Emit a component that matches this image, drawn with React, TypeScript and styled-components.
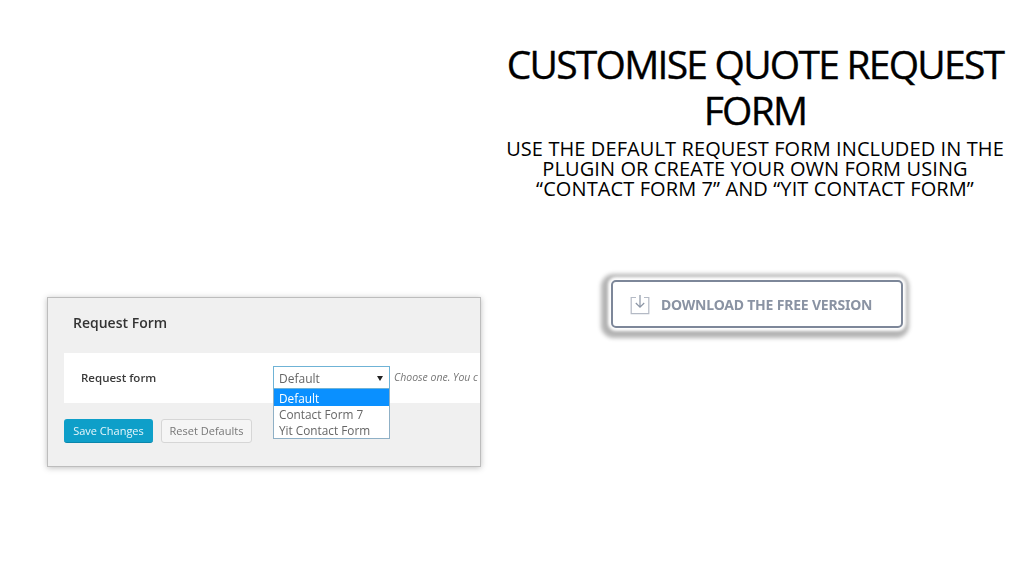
import React from 'react';
import styled, { createGlobalStyle } from 'styled-components';

const GlobalStyle = createGlobalStyle`
  html, body { margin: 0; padding: 0; background: #fff; }
`;

function DownloadIcon() {
  return (
    <svg width="20" height="21" viewBox="0 0 20 21" fill="none" strokeWidth="1.2">
      <path d="M6 3.5H1.2V19.6H18.8V3.5H14" stroke="#b4bac5" />
      <path d="M10 1V13M5.8 9L10 13.2L14.2 9" stroke="#8b95a5" />
    </svg>
  );
}

export default function App() {
  return (
    <Slide>
      <GlobalStyle />
      <LeftColumn>
        <Panel>
          <PanelTitle>Request Form</PanelTitle>
          <FormRow>
            <FieldLabel>Request form</FieldLabel>
            <SelectWrap>
              <SelectBox>
                <span>Default</span>
                <Caret />
              </SelectBox>
              <OptionList>
                <Option $active>Default</Option>
                <Option>Contact Form 7</Option>
                <Option>Yit Contact Form</Option>
              </OptionList>
            </SelectWrap>
            <Hint>Choose one. You c</Hint>
          </FormRow>
          <Actions>
            <SaveButton>Save Changes</SaveButton>
            <ResetButton>Reset Defaults</ResetButton>
          </Actions>
        </Panel>
      </LeftColumn>
      <RightColumn>
        <Title>CUSTOMISE QUOTE REQUEST FORM</Title>
        <Subtitle>
          USE THE DEFAULT REQUEST FORM INCLUDED IN THE PLUGIN OR CREATE YOUR OWN FORM USING
          “CONTACT FORM 7” AND “YIT CONTACT FORM”
        </Subtitle>
        <DownloadButton>
          <DownloadIcon />
          <span>DOWNLOAD THE FREE VERSION</span>
        </DownloadButton>
      </RightColumn>
    </Slide>
  );
}

const Slide = styled.div`
  width: 1024px;
  height: 576px;
  overflow: hidden;
  display: flex;
  background: #fff;
  font-family: "Open Sans", "Noto Sans", sans-serif;
`;

const LeftColumn = styled.div`
  width: 505px;
  flex: none;
  box-sizing: border-box;
  padding: 297px 0 0 47px;
`;

const Panel = styled.div`
  width: 434px;
  height: 170px;
  box-sizing: border-box;
  border: 1px solid #bdbdbd;
  background: #f0f0f0;
  box-shadow: 0 1px 6px rgba(0, 0, 0, 0.25);
  padding: 16px 0 0 16px;
  overflow: hidden;
  filter: blur(0.4px);
`;

const PanelTitle = styled.div`
  font-size: 14px;
  line-height: 18px;
  font-weight: 600;
  color: #333;
  padding-left: 9px;
`;

const FormRow = styled.div`
  display: flex;
  align-items: flex-start;
  height: 50px;
  margin-top: 21px;
  padding: 13px 0 0 17px;
  box-sizing: border-box;
  background: #fff;
  white-space: nowrap;
`;

const FieldLabel = styled.div`
  width: 192px;
  flex: none;
  font-size: 11.5px;
  line-height: 23px;
  font-weight: 600;
  color: #3a3a3a;
`;

const SelectWrap = styled.div`
  position: relative;
  width: 117px;
  flex: none;
`;

const SelectBox = styled.div`
  height: 23px;
  box-sizing: border-box;
  border: 1px solid #6fb3d6;
  background: #fff;
  padding: 2px 6px 0 5px;
  display: flex;
  align-items: center;
  justify-content: space-between;
  font-size: 12px;
  color: #666;
`;

const Caret = styled.i`
  width: 0;
  height: 0;
  border-left: 3px solid transparent;
  border-right: 3px solid transparent;
  border-top: 5px solid #222;
`;

const OptionList = styled.div`
  position: absolute;
  left: 0;
  right: 0;
  top: 23px;
  height: 50px;
  box-sizing: border-box;
  border: 1px solid #8fb0c6;
  border-top: 0;
  background: #fff;
`;

const Option = styled.div<{ $active?: boolean }>`
  height: ${(p) => (p.$active ? '17px' : '16px')};
  line-height: ${(p) => (p.$active ? '18px' : '16px')};
  padding-left: 5px;
  font-size: 11.8px;
  color: ${(p) => (p.$active ? '#fff' : '#666')};
  background: ${(p) => (p.$active ? '#0a90ff' : 'transparent')};
`;

const Hint = styled.div`
  margin-left: 4px;
  font-size: 10.5px;
  line-height: 22px;
  font-style: italic;
  color: #777;
`;

const Actions = styled.div`
  display: flex;
  gap: 8px;
  margin-top: 16px;
`;

const SaveButton = styled.div`
  width: 89px;
  height: 24px;
  box-sizing: border-box;
  border-radius: 3px;
  background: #0e9fc9;
  border-bottom: 1px solid #0a86ab;
  color: #e6f6fb;
  font-size: 11px;
  line-height: 24px;
  text-align: center;
`;

const ResetButton = styled.div`
  width: 91px;
  height: 24px;
  box-sizing: border-box;
  border-radius: 3px;
  border: 1px solid #d6d6d6;
  background: #f5f5f5;
  color: #777;
  font-size: 11px;
  line-height: 22px;
  text-align: center;
`;

const RightColumn = styled.div`
  width: 500px;
  flex: none;
  padding-top: 41px;
  display: flex;
  flex-direction: column;
  align-items: center;
  text-align: center;
`;

const Title = styled.h1`
  margin: 0;
  width: 500px;
  font-size: 39px;
  line-height: 46px;
  font-weight: 400;
  color: #000;
  letter-spacing: -1.75px;
  -webkit-text-stroke: 0.35px #000;
`;

const Subtitle = styled.div`
  width: 500px;
  margin-top: 6px;
  font-size: 20px;
  line-height: 20px;
  color: #000;
  letter-spacing: 0.1px;
`;

const DownloadButton = styled.div`
  width: 292px;
  height: 48px;
  box-sizing: border-box;
  margin: 81px 0 0 4px;
  border: 2px solid #7d8799;
  border-radius: 5px;
  background: #fff;
  box-shadow: 0 0 3px 3px #fff, -2px 2px 4px 8px #b4b4b4;
  filter: blur(0.5px);
  display: flex;
  align-items: center;
  gap: 11px;
  padding-left: 17px;
  color: #8a93a3;
  font-family: "Noto Sans", sans-serif;
  font-size: 14px;
  font-weight: 700;
  letter-spacing: -0.2px;
`;
